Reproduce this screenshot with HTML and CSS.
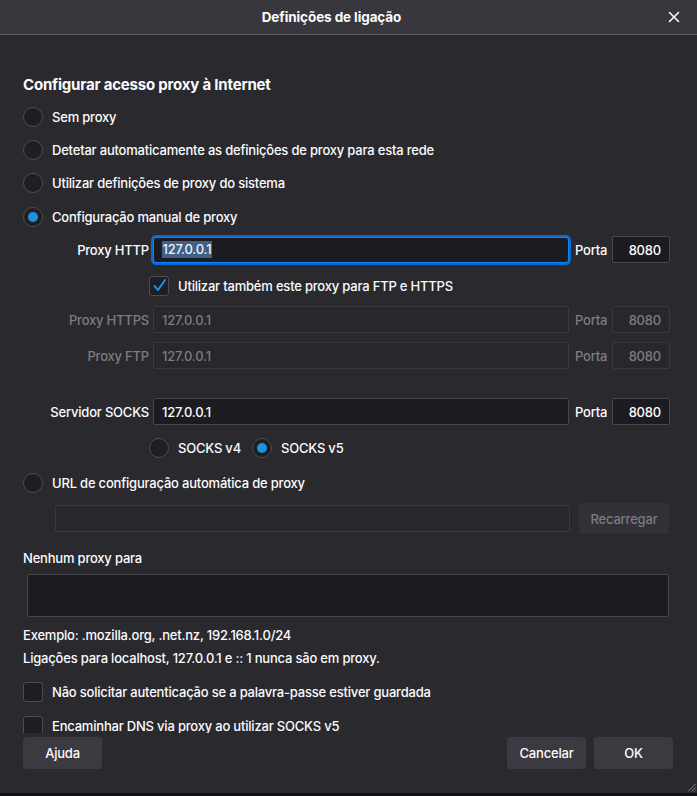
FILE: index.html
```html
<!DOCTYPE html>
<html lang="pt">
<head>
<meta charset="utf-8">
<title>Definições de ligação</title>
<link rel="stylesheet" href="styles.css">
</head>
<body>
<div class="window">
  <header class="titlebar">
    <span class="title">Definições de ligação</span>
    <span class="close">
      <svg width="12" height="12" viewBox="0 0 12 12"><path d="M1.5 1.5 L10.5 10.5 M10.5 1.5 L1.5 10.5" stroke="#fbfbfe" stroke-width="1.6" stroke-linecap="round"/></svg>
    </span>
  </header>

  <main class="content">
    <h1 class="heading">Configurar acesso proxy à Internet</h1>

    <div class="radio-row first"><span class="radio"></span><span>Sem proxy</span></div>
    <div class="radio-row"><span class="radio"></span><span>Detetar automaticamente as definições de proxy para esta rede</span></div>
    <div class="radio-row"><span class="radio"></span><span>Utilizar definições de proxy do sistema</span></div>
    <div class="radio-row"><span class="radio checked"></span><span>Configuração manual de proxy</span></div>

    <div class="manual">
      <div class="field-row row-http">
        <label class="flabel">Proxy HTTP</label>
        <div class="input focused"><span class="sel">127.0.0.1</span></div>
        <span class="plabel">Porta</span>
        <div class="input port">8080</div>
      </div>

      <div class="check-row row-also">
        <span class="checkbox checked">
          <svg width="17" height="17" viewBox="0 0 17 17"><path d="M3.5 9 L7 13 L14 3" fill="none" stroke="#1e90e0" stroke-width="2" stroke-linecap="round" stroke-linejoin="round"/></svg>
        </span>
        <span>Utilizar também este proxy para FTP e HTTPS</span>
      </div>

      <div class="field-row row-https disabled">
        <label class="flabel">Proxy HTTPS</label>
        <div class="input">127.0.0.1</div>
        <span class="plabel">Porta</span>
        <div class="input port">8080</div>
      </div>

      <div class="field-row row-ftp disabled">
        <label class="flabel">Proxy FTP</label>
        <div class="input">127.0.0.1</div>
        <span class="plabel">Porta</span>
        <div class="input port">8080</div>
      </div>

      <div class="field-row row-socks">
        <label class="flabel">Servidor SOCKS</label>
        <div class="input">127.0.0.1</div>
        <span class="plabel">Porta</span>
        <div class="input port">8080</div>
      </div>

      <div class="socks-versions">
        <span class="radio"></span><span class="ver">SOCKS v4</span>
        <span class="radio checked"></span><span>SOCKS v5</span>
      </div>
    </div>

    <div class="radio-row row-url"><span class="radio"></span><span>URL de configuração automática de proxy</span></div>

    <div class="url-row">
      <div class="input url disabled"></div>
      <button class="btn disabled-btn">Recarregar</button>
    </div>

    <div class="label-none">Nenhum proxy para</div>
    <div class="textarea"></div>
    <div class="hint hint-1">Exemplo: .mozilla.org, .net.nz, 192.168.1.0/24</div>
    <div class="hint">Ligações para localhost, 127.0.0.1 e :: 1 nunca são em proxy.</div>

    <div class="check-row row-auth">
      <span class="checkbox"></span>
      <span>Não solicitar autenticação se a palavra-passe estiver guardada</span>
    </div>
    <div class="check-row row-dns">
      <span class="checkbox"></span>
      <span>Encaminhar DNS via proxy ao utilizar SOCKS v5</span>
    </div>
  </main>

  <footer class="footer">
    <button class="btn">Ajuda</button>
    <span class="spacer"></span>
    <button class="btn">Cancelar</button>
    <button class="btn">OK</button>
    <svg class="grip" width="10" height="10" viewBox="0 0 10 10"><path d="M9.5 2 L2 9.5 M9.5 5.5 L5.5 9.5 M9.5 8.5 L8.5 9.5" stroke="#8a8a8e" stroke-width="1"/></svg>
  </footer>
  <div class="bottom-band"></div>
</div>
</body>
</html>
```

FILE: styles.css
```css
* { box-sizing: border-box; }

html, body {
  margin: 0;
  padding: 0;
  background: #2b2a33;
}

body {
  width: 697px;
  height: 796px;
  overflow: hidden;
  font-family: Inter, "Noto Sans", "Liberation Sans", sans-serif;
  font-size: 13px;
  font-weight: 500;
  letter-spacing: -0.2px;
  color: #fbfbfe;
}

.window {
  position: relative;
  display: flex;
  flex-direction: column;
  width: 697px;
  height: 796px;
  background: #2a2a2e;
}

.titlebar {
  position: relative;
  height: 35px;
  flex: none;
  background: #38373d;
  border-bottom: 1px solid #5f5e63;
  display: flex;
  align-items: center;
  justify-content: center;
  padding-right: 34px;
}

.title {
  font-weight: 700;
  font-size: 13.5px;
  letter-spacing: -0.1px;
}

.close {
  position: absolute;
  right: 17px;
  top: 11px;
  width: 12px;
  height: 12px;
  display: flex;
}

.content {
  flex: none;
  height: 698px;
  overflow: hidden;
  padding: 40px 28px 0 23px;
  display: flex;
  flex-direction: column;
}

.content > *, .manual > * { flex-shrink: 0; }

.heading {
  margin: 0;
  font-size: 15px;
  font-weight: 700;
  line-height: 20px;
  height: 20px;
  letter-spacing: -0.2px;
}

.radio-row {
  display: flex;
  align-items: center;
  height: 33.33px;
  gap: 9px;
}
.radio-row.first { margin-top: 5px; }

.radio {
  flex: none;
  width: 20px;
  height: 20px;
  border-radius: 50%;
  background: #1f1e24;
  border: 1px solid #4d4c52;
  display: flex;
  align-items: center;
  justify-content: center;
}
.radio.checked::after {
  content: "";
  width: 10px;
  height: 10px;
  border-radius: 50%;
  background: #1e90e0;
}

.manual {
  display: flex;
  flex-direction: column;
}

.field-row {
  display: flex;
  align-items: center;
  height: 27px;
}

.flabel {
  width: 126px;
  margin-right: 4px;
  text-align: right;
  flex: none;
  white-space: nowrap;
}

.input {
  flex: none;
  width: 416px;
  height: 27px;
  background: #1c1b21;
  border: 1px solid #48474d;
  border-radius: 2px;
  padding: 0 8px;
  display: flex;
  align-items: center;
  white-space: nowrap;
}

.input.focused {
  height: 26px;
  border: 1px solid #0a84ff;
  box-shadow: 0 0 0 2px #0a6ad0;
  border-radius: 3px;
}

.sel {
  background: #3e6089;
  color: #eef2f8;
  padding: 0 0.5px;
  line-height: 17px;
}

.plabel {
  width: 43px;
  padding-left: 6px;
  flex: none;
}

.input.port {
  width: 58px;
  justify-content: flex-end;
  padding: 0 8px;
}

.row-http { height: 30px; margin-top: 1.67px; }

.disabled { color: #7c7c81; }
.disabled .input, .input.disabled {
  background: #28272c;
  border-color: #3a393e;
  color: #7c7c81;
}

.check-row {
  display: flex;
  align-items: center;
  gap: 9px;
  height: 20px;
}

.checkbox {
  flex: none;
  width: 20px;
  height: 20px;
  border: 1px solid #4d4c52;
  background: #1f1e24;
  border-radius: 3px;
  display: flex;
  align-items: center;
  justify-content: center;
}

.row-also { margin-left: 126px; margin-top: 11px; }
.row-https { margin-top: 10.3px; }
.row-ftp { margin-top: 9px; }
.row-socks { margin-top: 29px; }

.socks-versions {
  display: flex;
  align-items: center;
  margin-left: 126px;
  margin-top: 13px;
  height: 20px;
}
.socks-versions .radio { margin-right: 9px; }
.socks-versions .ver { margin-right: 11px; }

.row-url { margin-top: 8.3px; }

.url-row {
  display: flex;
  align-items: center;
  height: 31px;
  margin-top: 3.3px;
  padding-left: 32px;
}

.input.url {
  width: 515px;
}

.btn {
  font: inherit;
  letter-spacing: inherit;
  color: #fbfbfe;
  background: #3b3a40;
  border: none;
  border-radius: 3px;
  height: 32px;
  width: 79px;
  padding: 0;
}

.url-row .btn {
  margin-left: 9px;
  width: 91px;
  height: 31px;
}

.disabled-btn {
  background: #323137;
  color: #7c7c81;
}

.label-none {
  margin-top: 14px;
  line-height: 20px;
  height: 20px;
}

.textarea {
  margin-top: 6.3px;
  margin-left: 4px;
  height: 43px;
  background: #1c1b21;
  border: 1px solid #48474d;
  border-radius: 2px;
}

.hint {
  line-height: 20px;
  height: 20px;
  margin-top: 2.7px;
}
.hint-1 { margin-top: 7.7px; }

.row-auth { margin-top: 14.6px; }
.row-dns { margin-top: 13.7px; }

.footer {
  flex: none;
  position: relative;
  height: 60px;
  padding: 4px 24px 0 23px;
  display: flex;
  align-items: flex-start;
  gap: 8px;
  background: #2a2a2e;
}

.footer .btn { width: 79px; }
.spacer { flex: 1; }

.grip {
  position: absolute;
  right: 1px;
  bottom: 1px;
}

.bottom-band {
  flex: 1;
  background: #111113;
}
```
